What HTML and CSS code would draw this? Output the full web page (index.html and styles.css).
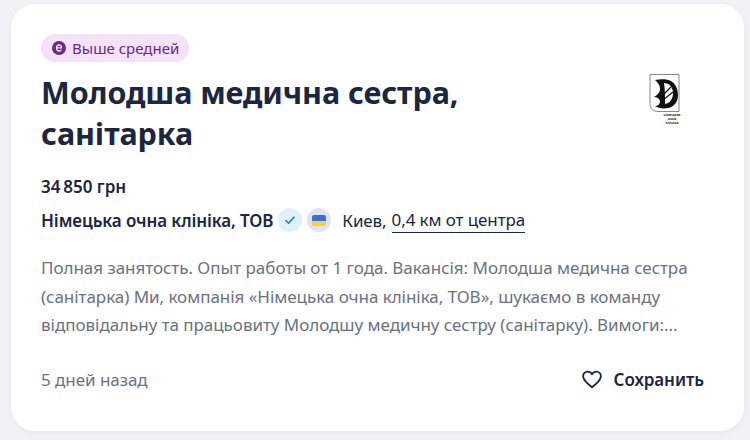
FILE: index.html
```html
<!DOCTYPE html>
<html lang="uk">
<head>
    <meta charset="UTF-8">
    <title>Вакансія</title>
    <link rel="stylesheet" href="styles.css">
</head>
<body>
    <div class="card">
        <div class="head">
            <div class="head-text">
                <span class="badge">
                    <svg class="badge-icon" width="14" height="14" viewBox="0 0 14 14">
                        <circle cx="7" cy="7" r="7" fill="#6a2a80"/>
                        <path d="M4.500 6.800h5c0-1.700-1-2.800-2.500-2.800S4.500 5.200 4.500 7s1 3 2.500 3c1 0 1.800-.4 2.300-1" fill="none" stroke="#f5e1f8" stroke-width="1.300"/>
                    </svg>
                    Выше средней
                </span>
                <h1 class="title">Молодша медична сестра, санітарка</h1>
            </div>
            <svg class="logo" width="32" height="52" viewBox="0 0 32 52">
                <path d="M1 .5h29v37H9c-5 0-8-3-8-8z" fill="#fff" stroke="#888" stroke-width="1"/>
                <path d="M6 6c6-1 12-1 16 1 5 3 7 9 7 14 0 7-4 12-10 13-5 1-10 0-13-2 3 0 5-2 5-5-1-3-3-4-6-4 3-2 6-4 6-8 0-4-2-6-5-9z" fill="#111"/>
                <path d="M15 9c5 0 9 4 9 10 0 6-3 10-8 11 0-8 0-15-1-21z" fill="#fff"/>
                <path d="M14 26l10-8M15 20l7-7" stroke="#111" stroke-width="1.200"/>
                <text class="logo-text" x="23" y="42">німецька</text>
                <text class="logo-text" x="23" y="46">очна</text>
                <text class="logo-text" x="23" y="50">клініка</text>
            </svg>
        </div>
        <div class="salary">34&#8201;850 грн</div>
        <div class="company-row">
            <span class="company">Німецька очна клініка, ТОВ</span>
            <span class="round round-blue">
                <svg width="12" height="10" viewBox="0 0 12 10"><path d="M1.500 5.200l3 3 6-6.500" fill="none" stroke="#2f74b5" stroke-width="1.600"/></svg>
            </span>
            <span class="round round-grey"><span class="flag"></span></span>
            <span class="city">Киев,</span>
            <span class="distance">0,4 км от центра</span>
        </div>
        <p class="desc">Полная занятость. Опыт работы от 1 года. Вакансія: Молодша медична сестра (санітарка) Ми, компанія «Німецька очна клініка, ТОВ», шукаємо в команду відповідальну та працьовиту Молодшу медичну сестру (санітарку). Вимоги:...</p>
        <div class="foot">
            <span class="date">5 дней назад</span>
            <span class="save">
                <svg width="20" height="19" viewBox="0 0 22 20"><path d="M11 18.500C5 14 1.200 10.600 1.200 6.500 1.200 3.500 3.500 1.300 6.200 1.300c2 0 3.800 1 4.800 3 1-2 2.800-3 4.800-3 2.700 0 5 2.200 5 5.200 0 4.100-3.800 7.500-9.800 12z" fill="none" stroke="#1b2640" stroke-width="2" stroke-linejoin="round"/></svg>
                Сохранить
            </span>
        </div>
    </div>
</body>
</html>
```

FILE: styles.css
```css
* {
    box-sizing: border-box;
}

html, body {
    height: 100%;
}

body {
    margin: 0;
    padding: 4px 6px 9px 11px;
    background-color: #f1f2f5;
    font-family: "Noto Sans", sans-serif;
    color: #1b2640;
    overflow: hidden;
}

.card {
    height: 427px;
    padding: 30px 40px 0 30px;
    background-color: #fff;
    border-radius: 24px;
    box-shadow: 0 2px 6px rgba(27, 38, 64, 0.04);
}

.head {
    display: flex;
    justify-content: space-between;
}

.head-text {
    width: 480px;
}

.badge {
    display: inline-flex;
    align-items: center;
    gap: 6px;
    height: 28px;
    padding: 0 10px 0 11px;
    border-radius: 14px;
    background-color: #f5e1f8;
    color: #6a2a80;
    font-size: 15px;
}

.title {
    margin: 10px 0 0;
    font-size: 30.500px;
    line-height: 41px;
    font-weight: 700;
    letter-spacing: -0.1px;
}

.logo {
    margin: 40px 23px 0 0;
}

.logo-text {
    font-size: 3.500px;
    font-weight: 700;
    text-anchor: middle;
    fill: #333;
}

.salary {
    margin-top: 21px;
    font-size: 17px;
    line-height: 24px;
    font-weight: 600;
}

.company-row {
    display: flex;
    align-items: center;
    margin-top: 8px;
    height: 26px;
    font-size: 17px;
    letter-spacing: -0.1px;
}

.company {
    font-weight: 600;
    margin-right: 5px;
}

.round {
    display: flex;
    align-items: center;
    justify-content: center;
    width: 24px;
    height: 24px;
    border-radius: 50%;
    margin-right: 5px;
}

.round-blue {
    background-color: #dff1fc;
}

.round-grey {
    background-color: #dfe3f3;
}

.flag {
    width: 14px;
    height: 11px;
    border-radius: 2px;
    background: linear-gradient(#3d6fc4 50%, #f7d230 50%);
}

.city {
    margin: 0 5px 0 6px;
}

.distance {
    border-bottom: 1px solid #1b2640;
    line-height: 24px;
}

.desc {
    margin: 21px 0 0;
    font-size: 17px;
    letter-spacing: -0.04px;
    line-height: 28.500px;
    color: #6b7280;
}

.foot {
    display: flex;
    justify-content: space-between;
    align-items: center;
    margin-top: 28px;
}

.date {
    color: #6b7280;
    font-size: 17px;
    letter-spacing: -0.05px;
}

.save {
    display: flex;
    align-items: center;
    gap: 12px;
    font-size: 17px;
    letter-spacing: -0.05px;
    font-weight: 600;
}
```
